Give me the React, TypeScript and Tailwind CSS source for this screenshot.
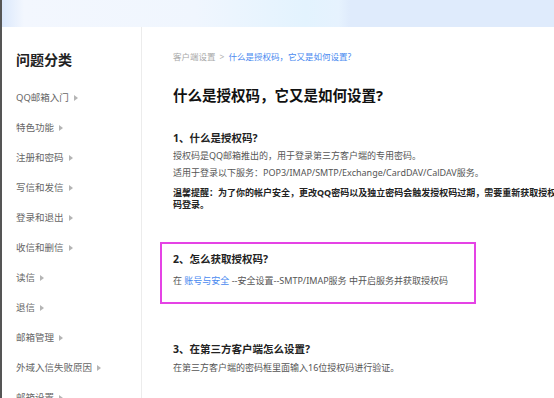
import React from "react";

const items = [
  "QQ邮箱入门",
  "特色功能",
  "注册和密码",
  "写信和发信",
  "登录和退出",
  "收信和删信",
  "读信",
  "退信",
  "邮箱管理",
  "外域入信失败原因",
  "邮箱设置",
];

function Arrow() {
  return (
    <svg width="4" height="6" viewBox="0 0 4 6" className="ml-[5px] shrink-0">
      <path d="M0 0 L4 3 L0 6 Z" fill="#b5b5b5" />
    </svg>
  );
}

export default function App() {
  return (
    <div className="w-[554px] h-[398px] overflow-hidden bg-white border-l-2 border-[#555] flex flex-col font-['Noto_Sans','Noto_Sans_CJK_SC',sans-serif]">
      <div className="h-[27px] shrink-0 bg-[linear-gradient(90deg,#dbe8fc_0%,#f3f7fe_4%,#f0f6fe_35%,#e3f3fe_55%,#e6f2fe_61%,#dfebfc_63%,#dfebfc_100%)]" />
      <div className="flex flex-1 min-h-0">
        <aside className="w-[140px] shrink-0 border-r border-[#ececec] pl-[14px] pt-[23px]">
          <div className="text-[14px] leading-[20px] font-bold text-[#222]">问题分类</div>
          <ul className="mt-[13px]">
            {items.map((t) => (
              <li key={t} className="h-[30px] flex items-center text-[9.5px] text-[#666]">
                <span>{t}</span>
                <Arrow />
              </li>
            ))}
          </ul>
        </aside>
        <main className="flex-1 min-w-0 pl-[18px] pt-[24px]">
          <div className="text-[8.5px] leading-[12px] whitespace-nowrap pl-[13px]">
            <span className="text-[#a8a8a8]">客户端设置</span>
            <span className="text-[#b0b0b0] mx-[4px]">&gt;</span>
            <span className="text-[#4a8af0]">什么是授权码，它又是如何设置?</span>
          </div>
          <h1 className="mt-[22px] pl-[13px] text-[14.5px] leading-[20px] font-bold text-[#111] whitespace-nowrap">
            什么是授权码，它又是如何设置?
          </h1>

          <section className="mt-[23px] w-[411px] border-2 border-transparent px-[11px]">
            <h2 className="text-[10.5px] leading-[16px] font-bold text-[#222]">1、什么是授权码?</h2>
            <p className="mt-[4px] text-[9px] leading-[12px] text-[#555]">
              授权码是QQ邮箱推出的，用于登录第三方客户端的专用密码。
            </p>
            <p className="mt-[5px] text-[9px] leading-[12px] text-[#555] whitespace-nowrap">
              适用于登录以下服务：POP3/IMAP/SMTP/Exchange/CardDAV/CalDAV服务。
            </p>
            <p className="mt-[8px] text-[9px] leading-[12px] font-bold text-[#222]">
              温馨提醒：为了你的帐户安全，更改QQ密码以及独立密码会触发授权码过期，需要重新获取授权码登录。
            </p>
          </section>

          <section className="mt-[29px] w-[316px] border-2 border-[#e543e5] px-[11px] pt-[7px] pb-[15px]">
            <h2 className="text-[10.5px] leading-[16px] font-bold text-[#222]">2、怎么获取授权码?</h2>
            <p className="mt-[8px] text-[9px] leading-[12px] text-[#555] whitespace-nowrap">
              在 <span className="text-[#4a8af0]">账号与安全</span> --安全设置--SMTP/IMAP服务 中开启服务并获取授权码
            </p>
          </section>

          <section className="mt-[35px] w-[411px] border-2 border-transparent px-[11px]">
            <h2 className="text-[10.5px] leading-[16px] font-bold text-[#222]">3、在第三方客户端怎么设置?</h2>
            <p className="mt-[5px] text-[9px] leading-[12px] text-[#555]">
              在第三方客户端的密码框里面输入16位授权码进行验证。
            </p>
          </section>
        </main>
      </div>
    </div>
  );
}
